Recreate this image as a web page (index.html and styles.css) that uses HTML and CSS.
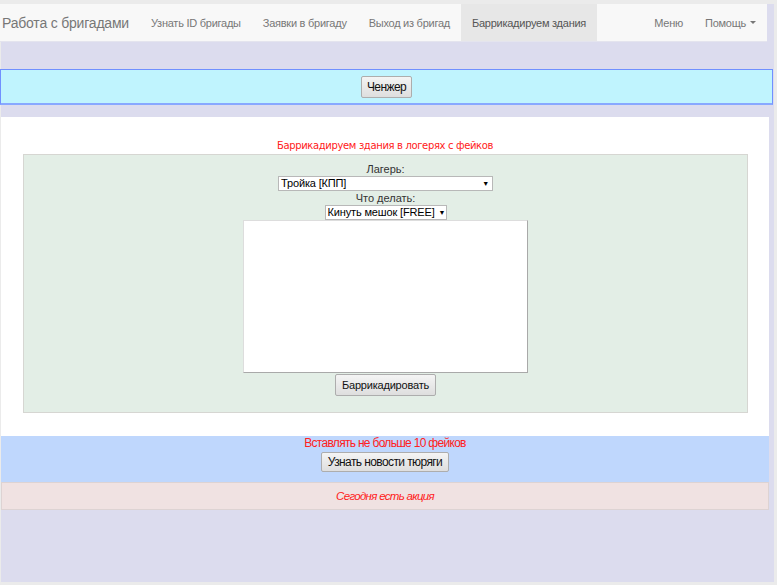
FILE: index.html
```html
<!DOCTYPE html>
<html lang="ru">
<head>
<meta charset="utf-8">
<title>Работа с бригадами</title>
<link rel="stylesheet" href="styles.css">
</head>
<body>
<div class="page">
  <nav class="navbar">
    <a class="brand" href="#">Работа с бригадами</a>
    <ul class="nav">
      <li><a href="#">Узнать ID бригады</a></li>
      <li><a href="#">Заявки в бригаду</a></li>
      <li><a href="#">Выход из бригад</a></li>
      <li class="active"><a href="#">Баррикадируем здания</a></li>
    </ul>
    <ul class="nav nav-right">
      <li><a href="#">Меню</a></li>
      <li><a href="#">Помощь <span class="caret"></span></a></li>
    </ul>
  </nav>

  <div class="changer">
    <button class="btn narrow">Ченжер</button>
  </div>

  <div class="main">
    <div class="title">Баррикадируем здания в логерях с фейков</div>
    <div class="form-box">
      <div class="label">Лагерь:</div>
      <div class="select sel-camp"><span>Тройка [КПП]</span><span class="arrow">▼</span></div>
      <div class="label">Что делать:</div>
      <div class="select sel-act"><span>Кинуть мешок [FREE]</span><span class="arrow">▼</span></div>
      <textarea class="fakes"></textarea>
      <button class="btn">Баррикадировать</button>
    </div>
  </div>

  <div class="info">
    <div class="warn">Вставлять не больше 10 фейков</div>
    <button class="btn narrow">Узнать новости тюряги</button>
  </div>

  <div class="promo">Сегодня есть акция</div>
</div>
</body>
</html>
```

FILE: styles.css
```css
html {
  background: #ebebeb;
  margin: 0;
  padding: 0;
}
body {
  margin: 0;
  padding: 4px 3px 3px 1px;
  font-family: "Liberation Sans", Arial, sans-serif;
}
.page {
  background: #dcdcee;
  height: 578px;
  display: flex;
  flex-direction: column;
}
.navbar {
  margin-left: -1px;
  width: 767px;
  height: 38px;
  background: #f8f8f8;
  border-bottom: 1px solid #e4e4ee;
  display: flex;
  align-items: stretch;
  box-sizing: border-box;
}
.brand {
  font-size: 14px;
  color: #777;
  text-decoration: none;
  padding: 0 11px 0 2px;
  display: flex;
  align-items: center;
  letter-spacing: -0.2px;
  white-space: nowrap;
}
.nav {
  list-style: none;
  margin: 0;
  padding: 0;
  display: flex;
}
.nav li {
  display: flex;
}
.nav a {
  display: flex;
  align-items: center;
  padding: 0 11px;
  font-size: 11px;
  color: #777;
  text-decoration: none;
  letter-spacing: -0.25px;
  white-space: nowrap;
}
.nav li.active a {
  background: #e7e7e7;
  color: #555;
}
.nav-right {
  margin-left: auto;
  margin-right: 0;
}
.caret {
  display: inline-block;
  width: 0;
  height: 0;
  margin-left: 4px;
  border-top: 3px solid #777;
  border-left: 3px solid transparent;
  border-right: 3px solid transparent;
  vertical-align: middle;
}
.changer {
  margin-top: 27px;
  width: 773px;
  height: 36px;
  box-sizing: border-box;
  margin-left: -1px;
  background: #c0f4fe;
  border: 1px solid #7090ff;
  border-bottom: 2px solid #88a8ff;
  display: flex;
  align-items: center;
  justify-content: center;
}
.btn {
  font-family: "Liberation Sans", Arial, sans-serif;
  font-size: 11px;
  color: #111;
  background: linear-gradient(#f4f4f4, #dedede);
  border: 1px solid #adadad;
  border-radius: 2px;
  padding: 0 6px;
  height: 22px;
  margin: 0;
  white-space: nowrap;
  letter-spacing: -0.2px;
}
.narrow {
  font-size: 12px;
  letter-spacing: -0.6px;
}
.changer .btn {
  height: 22px;
  padding: 0 5px;
}
.main {
  margin-top: 12px;
  width: 768px;
  background: #fff;
  padding: 21px 0 23px;
  box-sizing: border-box;
}
.title {
  text-align: center;
  color: #ff2020;
  font-family: "DejaVu Sans", sans-serif;
  font-size: 10px;
  line-height: 16px;
  letter-spacing: -0.35px;
  white-space: nowrap;
}
.form-box {
  margin: 0 21px 0 22px;
  background: #e3eee6;
  border: 1px solid #d6d6d2;
  display: flex;
  flex-direction: column;
  align-items: center;
  padding: 7px 0 16px;
}
.label {
  font-size: 11px;
  color: #333;
  line-height: 14px;
  white-space: nowrap;
}
.select {
  background: #fff;
  border: 1px solid #b8b8b8;
  font-size: 11px;
  color: #000;
  height: 15px;
  box-sizing: border-box;
  display: flex;
  justify-content: space-between;
  align-items: center;
  padding: 0 3px 0 2px;
  line-height: 13px;
  white-space: nowrap;
  letter-spacing: -0.15px;
}
.select .arrow {
  font-size: 7px;
  margin-left: 4px;
}
.sel-camp {
  width: 215px;
}
.sel-act {
  width: 122px;
}
.fakes {
  display: block;
  width: 285px;
  height: 153px;
  box-sizing: border-box;
  border: 1px solid #a9a9a9;
  border-top-color: #ddd;
  border-left-color: #ddd;
  background: #fff;
  resize: none;
  margin: 0;
  padding: 0;
}
.form-box .btn {
  height: 22px;
  padding: 0 6px;
  margin-top: 1px;
}
.info {
  width: 768px;
  height: 46px;
  background: #bfd7fd;
  display: flex;
  flex-direction: column;
  align-items: center;
  box-sizing: border-box;
  padding-top: 1px;
}
.warn {
  color: #ff2020;
  font-size: 12px;
  letter-spacing: -0.7px;
  line-height: 12px;
  margin-bottom: 3px;
  white-space: nowrap;
}
.info .btn {
  height: 20px;
}
.promo {
  width: 768px;
  height: 28px;
  box-sizing: border-box;
  background: #f0e2e2;
  border: 1px solid #ddd3d3;
  color: #ff2020;
  font-style: italic;
  font-size: 11.5px;
  letter-spacing: -0.7px;
  display: flex;
  align-items: center;
  justify-content: center;
}
```
